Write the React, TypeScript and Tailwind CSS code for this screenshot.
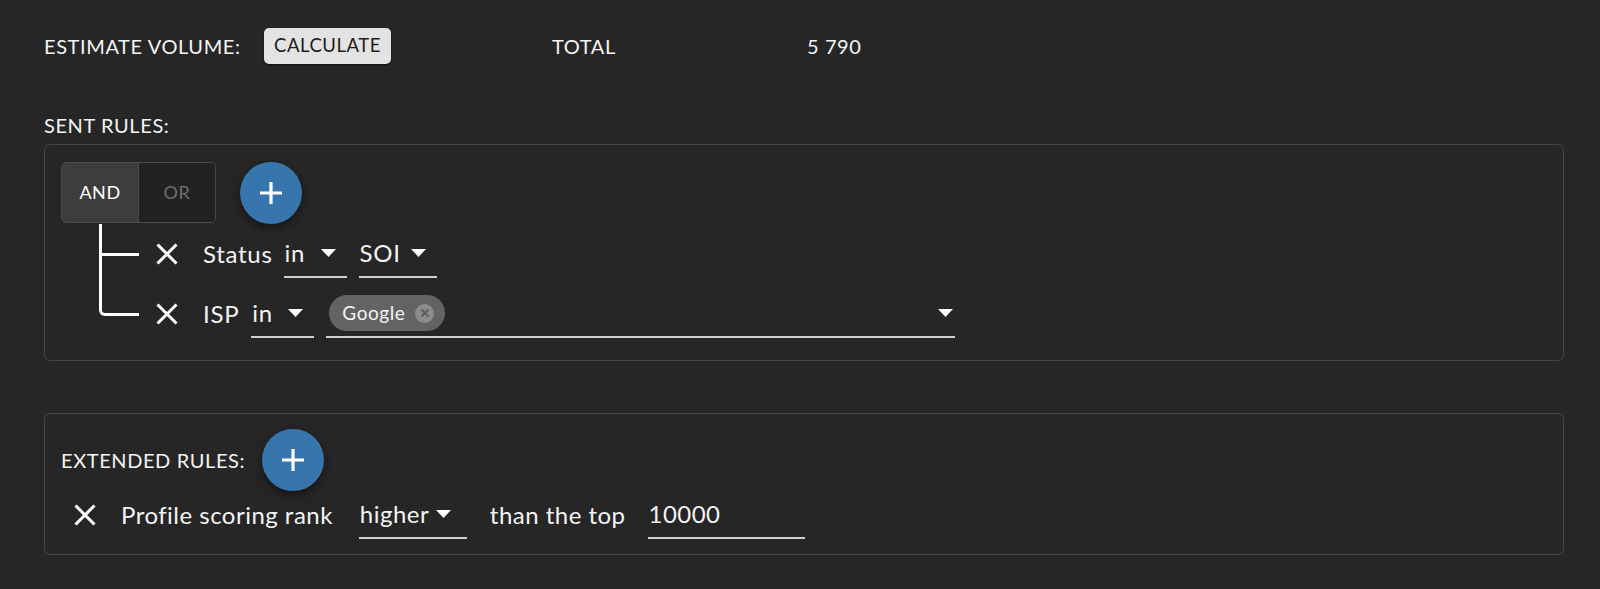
import React from "react";

const font = { fontFamily: "Lato, 'Liberation Sans', sans-serif" };

function XIcon() {
  return (
    <svg width="22" height="22" viewBox="0 0 22 22" className="text-white">
      <path d="M1.5 1.5 L20.5 20.5 M20.5 1.5 L1.5 20.5" stroke="currentColor" strokeWidth="3" strokeLinecap="butt" />
    </svg>
  );
}

function PlusButton() {
  return (
    <button className="flex h-[62px] w-[62px] shrink-0 items-center justify-center rounded-full bg-[#3776ad] shadow-[0_4px_10px_rgba(0,0,0,0.45)]">
      <svg width="24" height="24" viewBox="0 0 24 24">
        <path d="M12 1 V23 M1 12 H23" stroke="white" strokeWidth="3.2" />
      </svg>
    </button>
  );
}

function Caret() {
  return (
    <svg width="15" height="8" viewBox="0 0 15 8" className="shrink-0">
      <polygon points="0,0 15,0 7.5,8" fill="white" />
    </svg>
  );
}

function Select({ value, width, pad = "pr-[11px]" }: { value: string; width: string; pad?: string }) {
  return (
    <div className={`flex h-12 shrink-0 items-center justify-between border-b-2 border-[#cfcfcf] pl-[1px] ${pad} ${width}`}>
      <span>{value}</span>
      <Caret />
    </div>
  );
}

function RemoveButton({ className = "" }: { className?: string }) {
  return (
    <button className={`flex h-12 w-12 shrink-0 items-center justify-center ${className}`}>
      <XIcon />
    </button>
  );
}

function Connector({ last }: { last?: boolean }) {
  return (
    <div className="ml-[38px] flex w-[40px] shrink-0 flex-col self-stretch">
      <div className={`flex-1 border-b-[3px] border-l-[3px] border-white ${last ? "rounded-bl-[6px]" : ""}`} />
      <div className={`flex-1 ${last ? "" : "border-l-[3px] border-white"}`} />
    </div>
  );
}

export default function App() {
  return (
    <div className="min-h-screen bg-[#262626] pl-[44px] pr-[36px] pt-[28px] text-[#f4f4f4]" style={font}>
      {/* estimate */}
      <div className="flex h-9 items-center text-[20px] tracking-[0.03em]">
        <span className="w-[220px]">ESTIMATE VOLUME:</span>
        <button className="h-9 w-[127px] rounded-[5px] bg-[#e3e3e3] text-[18.5px] tracking-[0.03em] text-[#1c1c1c] shadow-[0_1px_2px_rgba(0,0,0,0.6)]">
          CALCULATE
        </button>
        <span className="ml-[161px] w-[255px]">TOTAL</span>
        <span>5 790</span>
      </div>

      <div className="mt-[49px] text-[20px] leading-[24px] tracking-[0.03em]">SENT RULES:</div>

      <div className="mt-[7px] rounded-md border border-[#474747] pb-4 pl-4 pt-[17px]">
        <div className="flex items-start gap-6">
          <div className="flex h-[61px] overflow-hidden rounded-[5px] border border-[#4a4a4a] text-[18px] tracking-[0.03em]">
            <button className="w-[77px] border-r border-[#4a4a4a] bg-[#3d3d3d] text-white">AND</button>
            <button className="w-[76px] bg-[#222222] text-[#6f6f6f]">OR</button>
          </div>
          <PlusButton />
        </div>

        <div className="flex flex-col text-[24px] tracking-[0.03em]">
          <div className="flex h-[60px] items-center">
            <Connector />
            <RemoveButton className="ml-1" />
            <span className="ml-3">Status</span>
            <div className="ml-[11px]">
              <Select value="in" width="w-[63px]" />
            </div>
            <div className="ml-3">
              <Select value="SOI" width="w-[78px]" />
            </div>
          </div>
          <div className="flex h-[60px] items-center">
            <Connector last />
            <RemoveButton className="ml-1" />
            <span className="ml-3">ISP</span>
            <div className="ml-3">
              <Select value="in" width="w-[63px]" />
            </div>
            <div className="ml-3 flex h-12 w-[629px] items-center justify-between border-b-2 border-[#cfcfcf] pl-[3px] pr-[2px]">
              <span className="flex h-[36px] items-center gap-[10px] rounded-full bg-[#636363] pl-[13px] pr-[11px] text-[19px] tracking-[0.03em]">
                Google
                <span className="flex h-[19px] w-[19px] items-center justify-center rounded-full bg-[#8c8c8c]">
                  <svg width="10" height="10" viewBox="0 0 10 10">
                    <path d="M1.5 1.5 L8.5 8.5 M8.5 1.5 L1.5 8.5" stroke="#5c5c5c" strokeWidth="1.8" />
                  </svg>
                </span>
              </span>
              <Caret />
            </div>
          </div>
        </div>
      </div>

      <div className="mt-[52px] rounded-md border border-[#474747] pb-[15px] pl-4 pt-[15px]">
        <div className="flex items-center gap-[17px]">
          <span className="text-[20px] tracking-[0.03em]">EXTENDED RULES:</span>
          <PlusButton />
        </div>
        <div className="flex h-12 items-center text-[24px] tracking-[0.02em]">
          <RemoveButton />
          <span className="ml-3">Profile scoring rank</span>
          <div className="ml-[26px]">
            <Select value="higher" width="w-[108px]" pad="pr-[16px]" />
          </div>
          <span className="ml-[23px]">than the top</span>
          <div className="ml-[23px] flex h-12 w-[157px] items-center border-b-2 border-[#cfcfcf]">10000</div>
        </div>
      </div>
    </div>
  );
}
